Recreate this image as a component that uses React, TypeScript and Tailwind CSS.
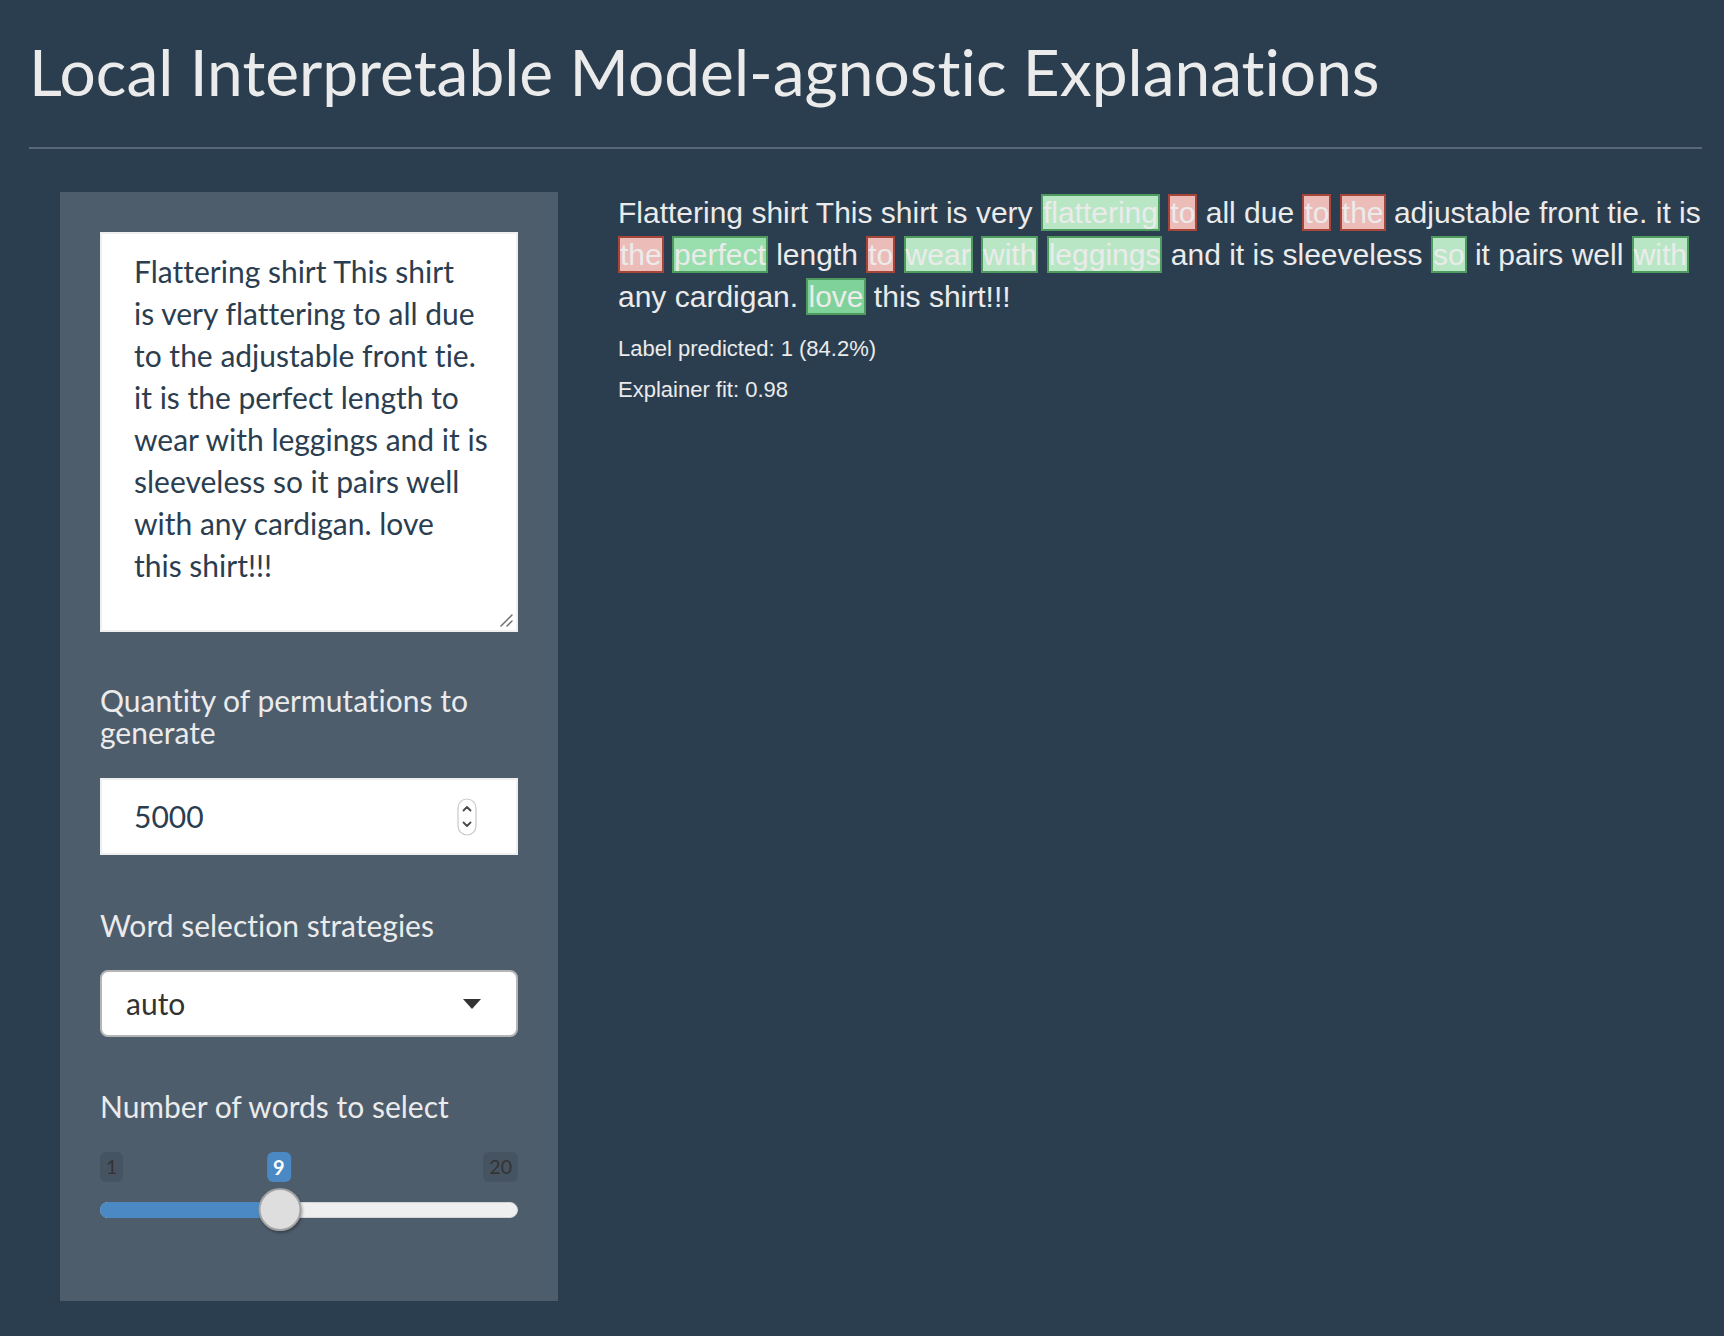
import React from 'react'

// line breaks kept as in the reference wrap
const reviewLines = [
  'Flattering shirt This shirt',
  'is very flattering to all due',
  'to the adjustable front tie.',
  'it is the perfect length to',
  'wear with leggings and it is',
  'sleeveless so it pairs well',
  'with any cardigan. love',
  'this shirt!!!',
]

type Tone = 'plain' | 'pos' | 'pos2' | 'pos3' | 'neg'

const tones: Record<Tone, string> = {
  plain: '',
  pos: 'border-2 border-[#4f9a5f] bg-[#b9e7c6]',
  pos2: 'border-2 border-[#4f9a5f] bg-[#99dfae]',
  pos3: 'border-2 border-[#4f9a5f] bg-[#7fd39a]',
  neg: 'border-2 border-[#a8453b] bg-[#ecbcb8]',
}

const tokens: [string, Tone][] = [
  ['Flattering shirt This shirt is very', 'plain'],
  ['flattering', 'pos'],
  ['to', 'neg'],
  ['all due', 'plain'],
  ['to', 'neg'],
  ['the', 'neg'],
  ['adjustable front tie. it is', 'plain'],
  ['the', 'neg'],
  ['perfect', 'pos2'],
  ['length', 'plain'],
  ['to', 'neg'],
  ['wear', 'pos'],
  ['with', 'pos'],
  ['leggings', 'pos'],
  ['and it is sleeveless', 'plain'],
  ['so', 'pos'],
  ['it pairs well', 'plain'],
  ['with', 'pos'],
  ['any cardigan.', 'plain'],
  ['love', 'pos3'],
  ['this shirt!!!', 'plain'],
]

const slider = { min: 1, max: 20, value: 9 }

function Label({ children }: { children: React.ReactNode }) {
  return <div className="text-[30px] leading-[32px] text-[#ebebeb]">{children}</div>
}

function Slider() {
  const pct = (slider.value - slider.min) / (slider.max - slider.min)
  // handle travels inside the track minus its own width (42px)
  const center = 21 + pct * (417 - 42)
  return (
    <div className="relative h-[109px]">
      <div className="flex justify-between">
        <span className="rounded-[6px] bg-black/10 px-[6px] py-[2px] text-[19.6px] leading-[26px] text-[#333]">{slider.min}</span>
        <span className="rounded-[6px] bg-black/10 px-[6px] py-[2px] text-[19.6px] leading-[26px] text-[#333]">{slider.max}</span>
      </div>
      <div
        className="absolute top-0 -translate-x-1/2 rounded-[6px] bg-[#4b89c5] px-[6px] py-[2px] text-[20px] leading-[26px] font-bold text-white"
        style={{ left: center }}
      >
        {slider.value}
      </div>
      <div className="relative mt-[20px] h-[16px] rounded-full border border-[#d4d4d4] bg-[#efefef]">
        <div className="absolute -left-px -top-px h-[16px] rounded-l-full bg-[#4b89c5]" style={{ width: center }} />
        <div
          className="absolute top-[-15px] h-[43px] w-[43px] -translate-x-1/2 rounded-full border-2 border-[#a3a3a3] bg-[#dedede] shadow-[1px_2px_3px_rgba(0,0,0,0.3)]"
          style={{ left: center }}
        />
      </div>
    </div>
  )
}

export default function App() {
  return (
    <div className="min-h-screen overflow-hidden bg-[#2b3e50] [font-family:Lato,sans-serif] [font-variant-ligatures:none] text-[#ebebeb]">
      <div className="pl-[29px] pr-[22px] pt-[36px]">
        <h1 className="text-[64px] leading-[72px] font-normal">Local Interpretable Model-agnostic Explanations</h1>
        <hr className="mt-[39px] border-t-2 border-[#56677a]" />
      </div>

      <div className="mt-[43px] flex pl-[30px]">
        <div className="w-[558px] shrink-0 px-[30px]">
          <div className="bg-[#4e5d6c] px-[40px] pt-[40px] pb-[40px]">
            <div className="relative">
              <textarea
                defaultValue={reviewLines.join('\n')}
                className="block h-[400px] w-full resize-none overflow-hidden border-2 border-[#efefef] bg-white pl-[32px] pr-[8px] py-[16px] text-[30px] leading-[42px] text-[#2b3e50] outline-none"
              />
              <svg width="14" height="14" viewBox="0 0 14 14" className="pointer-events-none absolute bottom-[5px] right-[5px]">
                <path d="M13 2 L2 13 M13 8 L8 13" stroke="#6f6f6f" strokeWidth="1.5" strokeLinecap="round" />
              </svg>
            </div>

            <div className="mt-[52px]">
              <Label>Quantity of permutations to generate</Label>
            </div>
            <div className="mt-[30px] flex h-[77px] items-center border-2 border-[#efefef] bg-white pl-[32px] pr-[39px]">
              <input
                defaultValue="5000"
                className="min-w-0 flex-1 bg-transparent text-[30px] text-[#2b3e50] outline-none"
              />
              <svg width="20" height="38" viewBox="0 0 20 38" className="shrink-0">
                <rect x="1" y="1" width="18" height="36" rx="9" fill="#fff" stroke="#c9c9c9" strokeWidth="1.2" />
                <path d="M6.5 12.5 L10 9 L13.5 12.5" fill="none" stroke="#4a4a4a" strokeWidth="1.8" strokeLinecap="round" strokeLinejoin="round" />
                <path d="M6.5 24.5 L10 28 L13.5 24.5" fill="none" stroke="#4a4a4a" strokeWidth="1.8" strokeLinecap="round" strokeLinejoin="round" />
              </svg>
            </div>

            <div className="mt-[54px]">
              <Label>Word selection strategies</Label>
            </div>
            <div className="mt-[29px] flex h-[67px] items-center justify-between rounded-[8px] border-2 border-[#b5b5b5] bg-white pl-[24px] pr-[35px]">
              <span className="text-[30px] text-[#333]">auto</span>
              <svg width="18" height="10" viewBox="0 0 18 10">
                <path d="M0 0 H18 L9 10 Z" fill="#333" />
              </svg>
            </div>

            <div className="mt-[53px]">
              <Label>Number of words to select</Label>
            </div>
            <div className="mt-[30px]">
              <Slider />
            </div>
          </div>
        </div>

        <div className="min-w-0 flex-1 pl-[30px] [font-family:'Liberation_Sans',Arial,sans-serif]">
          <div className="w-[1097px] text-[30px] leading-[42px]">
            {tokens.map(([word, tone], i) => (
              <React.Fragment key={i}>
                {i > 0 && ' '}
                {tone === 'plain' ? word : <span className={tones[tone]}>{word}</span>}
              </React.Fragment>
            ))}
          </div>
          <p className="mt-[15px] text-[22px] leading-[31px]">Label predicted: 1 (84.2%)</p>
          <p className="mt-[10px] text-[22px] leading-[31px]">Explainer fit: 0.98</p>
        </div>
      </div>
    </div>
  )
}
